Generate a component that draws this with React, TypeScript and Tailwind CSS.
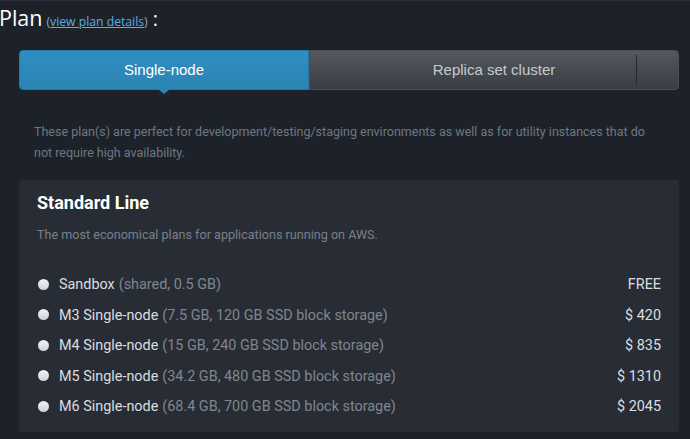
const PLANS = [
  { name: 'Sandbox', spec: '(shared, 0.5 GB)', price: 'FREE' },
  { name: 'M3 Single-node', spec: '(7.5 GB, 120 GB SSD block storage)', price: '$ 420' },
  { name: 'M4 Single-node', spec: '(15 GB, 240 GB SSD block storage)', price: '$ 835' },
  { name: 'M5 Single-node', spec: '(34.2 GB, 480 GB SSD block storage)', price: '$ 1310' },
  { name: 'M6 Single-node', spec: '(68.4 GB, 700 GB SSD block storage)', price: '$ 2045' },
]

export default function App() {
  return (
    <div className="w-[690px] h-[439px] overflow-hidden bg-[#1d222a] border-t border-[#2b3038]">
      {/* header */}
      <div className="h-[49px] pt-[3px] flex items-baseline text-white font-['Open_Sans',sans-serif]">
        <span className="text-[21.5px] leading-[28px] -ml-px">Plan</span>
        <span className="text-[12.2px] ml-[4px] text-[#9aa3ab]">
          (<a className="text-[#5aaee0] underline">view plan details</a>)
        </span>
        <span className="text-[20px] ml-[5px]">:</span>
      </div>

      <div className="ml-[19px] w-[660px]">
        {/* tabs */}
        <div className="relative flex h-[40px] rounded-[4px] font-['Liberation_Sans',Arial,sans-serif] text-[15px]">
          <div className="relative w-[290px] flex items-center justify-center rounded-l-[4px] bg-gradient-to-b from-[#2f8ec0] to-[#2a84b4] text-white border border-[#2378a6]">
            Single-node
            <span className="absolute left-1/2 -translate-x-1/2 top-full border-x-[6px] border-x-transparent border-t-[5px] border-t-[#2a84b4]" />
          </div>
          <div className="relative flex-1 flex items-center justify-center rounded-r-[4px] bg-gradient-to-b from-[#54595f] to-[#383d44] border border-[#4a4f56] text-[#c6cacf]">
            Replica set cluster
            <span className="absolute top-[4px] bottom-[4px] right-[41px] w-px bg-[#25292f]" />
          </div>
        </div>

        {/* description */}
        <p className="mt-[31px] px-[15px] text-[12.5px] leading-[21px] text-[#6e7882] font-['Roboto',sans-serif]">
          These plan(s) are perfect for development/testing/staging environments as well as for utility instances that do
          not require high availability.
        </p>

        {/* card */}
        <div className="mt-[17px] h-[252px] rounded-[4px] bg-[#282d35] px-[18px] pt-[10px] font-['Roboto',sans-serif]">
          <h2 className="text-[18px] leading-[26px] font-bold text-white">Standard Line</h2>
          <p className="mt-[9px] text-[12.6px] leading-[20px] text-[#79808a]">
            The most economical plans for applications running on AWS.
          </p>
          <div className="mt-[25px] flex flex-col">
            {PLANS.map((p) => (
              <div key={p.name} className="h-[30.5px] flex items-center text-[14.4px]">
                <span className="w-[11px] h-[11px] -mt-[2px] rounded-full bg-gradient-to-b from-[#f2f3f4] to-[#cfd2d5] ml-[1px] mr-[10px]" />
                <span className="text-[#dadde0]">{p.name}</span>
                <span className="ml-[4px] text-[#80868e]">{p.spec}</span>
                <span className="ml-auto text-[#dadde0]">{p.price}</span>
              </div>
            ))}
          </div>
        </div>
      </div>
    </div>
  )
}
